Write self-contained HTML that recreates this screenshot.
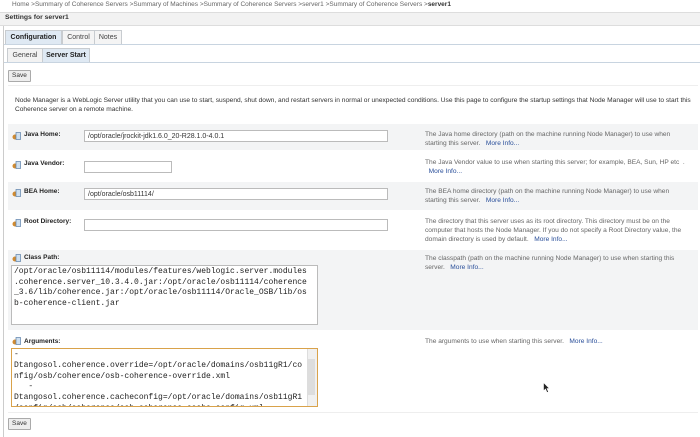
<!DOCTYPE html>
<html><head><style>
body{margin:0;width:700px;height:437px;background:#fff;font-family:"Liberation Sans",sans-serif;font-size:7px;color:#333;position:relative;overflow:hidden}
.a{position:absolute}
.bc{left:12px;top:1px;color:#666;font-size:6.5px}
.tab{position:absolute;border:1px solid #c8ccd0;border-bottom:none;background:#f4f4f4;font-size:7px;text-align:center;line-height:13px;color:#444}
.act{background:#dfe9f3;font-weight:bold;color:#222}
.btn{position:absolute;border:1px solid #aaa;background:#eee;font-size:6.5px;line-height:10px;padding:0 3px;color:#333;border-radius:1px}
.row{position:absolute;left:8px;width:690px}
.g{background:#f3f4f5}
.lbl{position:absolute;left:16px;font-weight:bold;font-size:6.5px;color:#222}
.ic{position:absolute;left:4px;width:9px;height:8px}
.inp{position:absolute;border:1px solid #bbb;background:#fff;height:12px;font-size:7px;line-height:12px;padding-left:3px;box-sizing:border-box}
.d{position:absolute;left:417px;width:262px;color:#666;font-size:6.6px;line-height:9px}
.m{color:#2a4f9a}
.ta{position:absolute;left:3px;width:307px;background:#fff;font-family:"Liberation Mono",monospace;font-size:8px;line-height:10.6px;color:#222;padding:1px 2px;box-sizing:border-box;overflow:hidden;white-space:pre}
</style></head><body>
<div class="a bc">Home &gt;Summary of Coherence Servers &gt;Summary of Machines &gt;Summary of Coherence Servers &gt;server1 &gt;Summary of Coherence Servers &gt;<b style="color:#333">server1</b></div>
<div class="a" style="left:0;top:12px;width:700px;height:12px;background:#f2f2f2;border-top:1px solid #ddd;border-bottom:1px solid #ddd"></div>
<div class="a" style="left:5px;top:14px;font-weight:bold;font-size:6.8px;color:#333">Settings for server1</div>
<div class="a" style="left:3px;top:26px;width:1px;height:411px;background:#ccc"></div>
<div class="tab act" style="left:5px;top:30px;width:55px;height:14px">Configuration</div>
<div class="tab" style="left:62px;top:30px;width:31px;height:14px">Control</div>
<div class="tab" style="left:94px;top:30px;width:26px;height:14px">Notes</div>
<div class="a" style="left:4px;top:44px;width:696px;height:1px;background:#c8d4e0"></div>
<div class="tab" style="left:7px;top:48px;width:34px;height:14px;background:#f2f2f2">General</div>
<div class="tab act" style="left:42px;top:48px;width:46px;height:14px">Server Start</div>
<div class="a" style="left:4px;top:62px;width:696px;height:1px;background:#c8d4e0"></div>
<div class="btn" style="left:8px;top:70px">Save</div>
<div class="a" style="left:8px;top:85px;width:690px;height:1px;background:#eee"></div>
<div class="a" style="left:15px;top:96px;width:680px;font-size:6.6px;line-height:9px;color:#333">Node Manager is a WebLogic Server utility that you can use to start, suspend, shut down, and restart servers in normal or unexpected conditions. Use this page to configure the startup settings that Node Manager will use to start this Coherence server on a remote machine.</div>

<div class="row g" style="top:124px;height:26px">
<svg class="ic" style="top:8px" viewBox="0 0 9 8"><circle cx="3" cy="5" r="2.5" fill="#d08a30"/><rect x="4" y="0.5" width="4.5" height="7" fill="#cfe0f0" stroke="#5a7fa8" stroke-width=".7"/></svg>
<div class="lbl" style="top:7px">Java Home:</div>
<div class="inp" style="left:76px;top:6px;width:304px">/opt/oracle/jrockit-jdk1.6.0_20-R28.1.0-4.0.1</div>
<div class="d" style="top:6px">The Java home directory (path on the machine running Node Manager) to use when starting this server. &nbsp; <span class="m">More Info...</span></div>
</div>
<div class="row" style="top:152px;height:28px">
<svg class="ic" style="top:9px" viewBox="0 0 9 8"><circle cx="3" cy="5" r="2.5" fill="#d08a30"/><rect x="4" y="0.5" width="4.5" height="7" fill="#cfe0f0" stroke="#5a7fa8" stroke-width=".7"/></svg>
<div class="lbl" style="top:8px">Java Vendor:</div>
<div class="inp" style="left:76px;top:9px;width:88px"></div>
<div class="d" style="top:6px">The Java Vendor value to use when starting this server; for example, BEA, Sun, HP etc &nbsp;. &nbsp; <span class="m">More Info...</span></div>
</div>
<div class="row g" style="top:182px;height:28px">
<svg class="ic" style="top:7px" viewBox="0 0 9 8"><circle cx="3" cy="5" r="2.5" fill="#d08a30"/><rect x="4" y="0.5" width="4.5" height="7" fill="#cfe0f0" stroke="#5a7fa8" stroke-width=".7"/></svg>
<div class="lbl" style="top:6px">BEA Home:</div>
<div class="inp" style="left:76px;top:6px;width:304px">/opt/oracle/osb11114/</div>
<div class="d" style="top:5px">The BEA home directory (path on the machine running Node Manager) to use when starting this server. &nbsp; <span class="m">More Info...</span></div>
</div>
<div class="row" style="top:212px;height:36px">
<svg class="ic" style="top:7px" viewBox="0 0 9 8"><circle cx="3" cy="5" r="2.5" fill="#d08a30"/><rect x="4" y="0.5" width="4.5" height="7" fill="#cfe0f0" stroke="#5a7fa8" stroke-width=".7"/></svg>
<div class="lbl" style="top:6px">Root Directory:</div>
<div class="inp" style="left:76px;top:7px;width:304px"></div>
<div class="d" style="top:5px">The directory that this server uses as its root directory. This directory must be on the computer that hosts the Node Manager. If you do not specify a Root Directory value, the domain directory is used by default. &nbsp; <span class="m">More Info...</span></div>
</div>
<div class="row g" style="top:250px;height:80px">
<svg class="ic" style="top:4px" viewBox="0 0 9 8"><circle cx="3" cy="5" r="2.5" fill="#d08a30"/><rect x="4" y="0.5" width="4.5" height="7" fill="#cfe0f0" stroke="#5a7fa8" stroke-width=".7"/></svg>
<div class="lbl" style="top:4px">Class Path:</div>
<div class="ta" style="top:15px;height:60px;border:1px solid #bbb">/opt/oracle/osb11114/modules/features/weblogic.server.modules
.coherence.server_10.3.4.0.jar:/opt/oracle/osb11114/coherence
_3.6/lib/coherence.jar:/opt/oracle/osb11114/Oracle_OSB/lib/os
b-coherence-client.jar</div>
<div class="d" style="top:4px">The classpath (path on the machine running Node Manager) to use when starting this server. &nbsp; <span class="m">More Info...</span></div>
</div>
<div class="row" style="top:332px;height:80px">
<svg class="ic" style="top:5px" viewBox="0 0 9 8"><circle cx="3" cy="5" r="2.5" fill="#d08a30"/><rect x="4" y="0.5" width="4.5" height="7" fill="#cfe0f0" stroke="#5a7fa8" stroke-width=".7"/></svg>
<div class="lbl" style="top:6px">Arguments:</div>
<div class="ta" style="top:16px;height:59px;border:1px solid #d9a24a;line-height:10.8px;padding-right:12px">-
Dtangosol.coherence.override=/opt/oracle/domains/osb11gR1/co
nfig/osb/coherence/osb-coherence-override.xml
   -
Dtangosol.coherence.cacheconfig=/opt/oracle/domains/osb11gR1
/config/osb/coherence/osb-coherence-cache-config.xml
   -Dtangosol.coherence.distributed.localstorage=true</div>
<div class="a" style="left:299px;top:17px;width:9px;height:57px;background:#f0f0f0;border-left:1px solid #ddd"></div>
<div class="a" style="left:300px;top:27px;width:7px;height:36px;background:#ddd"></div>
<div class="d" style="top:5px">The arguments to use when starting this server. &nbsp; <span class="m">More Info...</span></div>
</div>
<div class="a" style="left:8px;top:412px;width:690px;height:1px;background:#eee"></div>
<svg class="a" style="left:543px;top:382px" width="7" height="11" viewBox="0 0 7 11"><path d="M0.5 0.5 L0.5 9 L2.5 7 L4 10.5 L5.5 10 L4 6.5 L6.5 6.5 Z" fill="#222" stroke="#fff" stroke-width=".6"/></svg>
<div class="btn" style="left:8px;top:418px">Save</div>
</body></html>
